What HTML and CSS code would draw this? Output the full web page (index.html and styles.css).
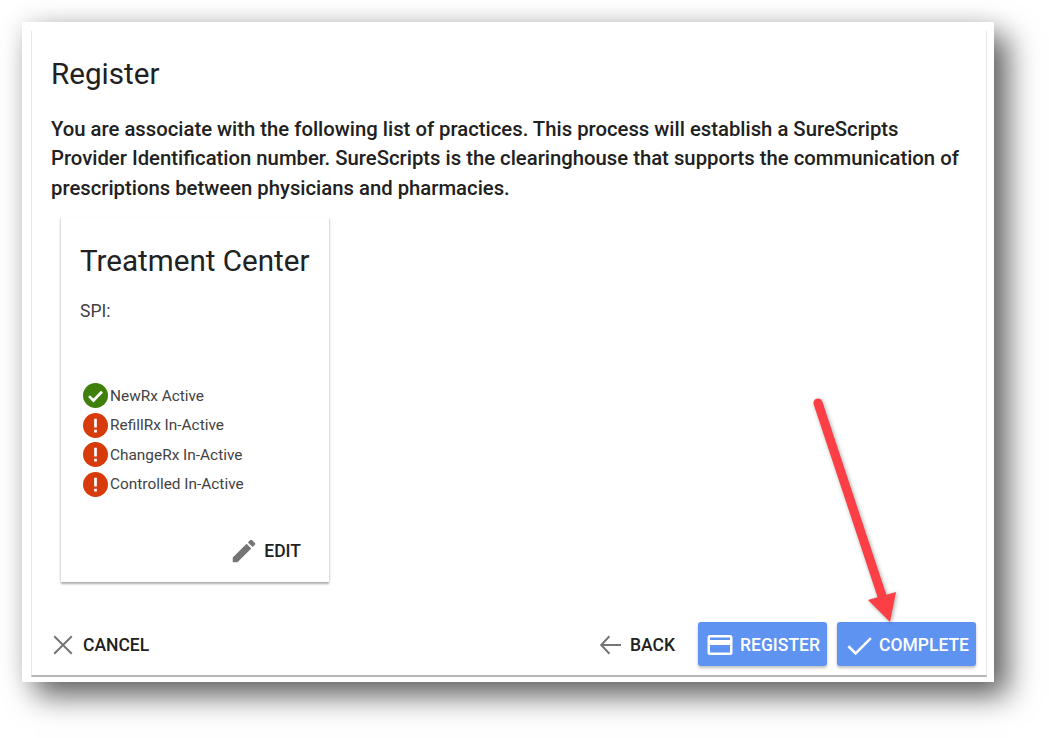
FILE: index.html
```html
<!DOCTYPE html>
<html lang="en">

<head>
    <meta charset="UTF-8">
    <meta name="viewport" content="width=device-width, initial-scale=1.0">
    <link rel="stylesheet" href="styles.css">
    <title>Register</title>
</head>

<body>

    <div class="shot">
        <div class="dialog">
            <h2 class="dialog-title">Register</h2>
            <p class="intro">You are associate with the following list of practices. This process will establish a SureScripts Provider Identification number. SureScripts is the clearinghouse that supports the communication of prescriptions between physicians and pharmacies.</p>

            <div class="practice-card">
                <h3>Treatment Center</h3>
                <p class="spi">SPI:</p>
                <ul class="status-list">
                    <li>
                        <svg class="status-icon" viewBox="0 0 24 24"><circle cx="12" cy="12" r="12" fill="#3f7f0b"/><path d="M5.800 12.600l4.200 4.200 8.200-8.400" fill="none" stroke="#fff" stroke-width="2.600"/></svg>
                        NewRx Active
                    </li>
                    <li>
                        <svg class="status-icon" viewBox="0 0 24 24"><circle cx="12" cy="12" r="12" fill="#d83b0b"/><path d="M10.700 5.500h2.600v8.500h-2.600zM10.700 16h2.600v2.600h-2.600z" fill="#fff"/></svg>
                        RefillRx In-Active
                    </li>
                    <li>
                        <svg class="status-icon" viewBox="0 0 24 24"><circle cx="12" cy="12" r="12" fill="#d83b0b"/><path d="M10.700 5.500h2.600v8.500h-2.600zM10.700 16h2.600v2.600h-2.600z" fill="#fff"/></svg>
                        ChangeRx In-Active
                    </li>
                    <li>
                        <svg class="status-icon" viewBox="0 0 24 24"><circle cx="12" cy="12" r="12" fill="#d83b0b"/><path d="M10.700 5.500h2.600v8.500h-2.600zM10.700 16h2.600v2.600h-2.600z" fill="#fff"/></svg>
                        Controlled In-Active
                    </li>
                </ul>
                <div class="card-actions">
                    <button class="btn">
                        <svg class="icon" viewBox="0 0 24 24"><path d="M3 17.250V21h3.750L17.810 9.940l-3.750-3.750L3 17.250zM20.710 7.040a1 1 0 0 0 0-1.410l-2.340-2.340a1 1 0 0 0-1.410 0l-1.830 1.830 3.750 3.750 1.830-1.830z"/></svg>
                        EDIT
                    </button>
                </div>
            </div>

            <div class="dialog-actions">
                <button class="btn">
                    <svg class="icon" viewBox="0 0 24 24"><path d="M5 5l14 14M19 5L5 19" fill="none" stroke="#757575" stroke-width="1.600"/></svg>
                    CANCEL
                </button>
                <div class="spacer"></div>
                <button class="btn btn-back">
                    <svg class="icon" viewBox="0 0 24 24"><path d="M20.800 12H5M11.500 5L5 12l6.500 7" fill="none" stroke="#757575" stroke-width="1.600"/></svg>
                    BACK
                </button>
                <button class="btn btn-primary">
                    <svg class="icon" viewBox="0 0 24 24"><path d="M20 4H4a2 2 0 0 0-2 2v12a2 2 0 0 0 2 2h16a2 2 0 0 0 2-2V6a2 2 0 0 0-2-2zm0 14H4v-6h16v6zm0-10H4V6h16v2z" fill="#fff"/></svg>
                    REGISTER
                </button>
                <button class="btn btn-primary">
                    <svg class="icon" viewBox="0 0 24 24"><path d="M3.500 13l5.800 5.800L21.500 6.500" fill="none" stroke="#fff" stroke-width="2"/></svg>
                    COMPLETE
                </button>
            </div>
        </div>

        <svg class="arrow" viewBox="0 0 90 230">
            <path d="M6 7L70 200" stroke="#fb3f45" stroke-width="9" stroke-linecap="round" fill="none"/>
            <path d="M56 204L84 196L78 226z" fill="#fb3f45"/>
        </svg>
    </div>

</body>

</html>
```

FILE: styles.css
```css
html, body {
    height: 100%;
}

body {
    font-family: 'Roboto', sans-serif;
    background-color: #fff;
    margin: 0;
    overflow: hidden;
}

.shot {
    position: relative;
    width: 972px;
    height: 660px;
    margin: 22px 0 0 22px;
    padding: 9px 7px 5px 9px;
    box-sizing: border-box;
    background-color: #fff;
    box-shadow: 14px 14px 28px rgba(0, 0, 0, 0.6), 0 0 24px rgba(0, 0, 0, 0.1);
}

.dialog {
    height: 100%;
    box-sizing: border-box;
    padding: 21px 10px 9px 19px;
    display: flex;
    flex-direction: column;
    border-left: 1px solid #e8e8e8;
    border-right: 1px solid #e8e8e8;
    border-bottom: 2px solid #b5b5b5;
}

.dialog-title {
    margin: 0;
    font-size: 29.600px;
    font-weight: 400;
    line-height: 44px;
    color: #212121;
}

.intro {
    margin: 19px 0 0 0;
    font-size: 20.300px;
    font-weight: 500;
    line-height: 29.400px;
    color: #212121;
}

.practice-card {
    width: 268px;
    height: 365px;
    margin: 14px 0 0 10px;
    padding: 23px 10px 0 19px;
    box-sizing: border-box;
    display: flex;
    flex-direction: column;
    background-color: #fff;
    box-shadow: 0 2px 2px rgba(0, 0, 0, 0.3), 0 0 3px rgba(0, 0, 0, 0.12);
    clip-path: inset(0 -6px -6px -6px);
}

.practice-card h3 {
    margin: 0;
    font-size: 29.600px;
    font-weight: 400;
    line-height: 42px;
    color: #212121;
    white-space: nowrap;
}

.spi {
    margin: 17px 0 0 0;
    font-size: 17.500px;
    line-height: 24px;
    color: #424242;
}

.status-list {
    list-style: none;
    margin: 58px 0 0 3px;
    padding: 0;
}

.status-list li {
    display: flex;
    align-items: center;
    gap: 2px;
    height: 29.500px;
    font-size: 15.400px;
    color: #424242;
}

.status-icon {
    width: 25px;
    height: 25px;
}

.card-actions {
    margin-top: auto;
    padding-bottom: 9px;
    display: flex;
    justify-content: flex-end;
    margin-right: 11px;
}

.btn {
    display: flex;
    align-items: center;
    gap: 5px;
    height: 44px;
    padding: 0 7px;
    font-family: inherit;
    font-size: 17.500px;
    font-weight: 500;
    color: #212121;
    background: none;
    border: none;
    border-radius: 3px;
    white-space: nowrap;
}

.icon {
    width: 30px;
    height: 30px;
    fill: #757575;
    flex-shrink: 0;
}

.dialog-actions {
    margin-top: auto;
    margin-left: -10px;
    display: flex;
    align-items: center;
    gap: 10px;
}

.dialog-actions .btn {
    padding-top: 1px;
}

.spacer {
    flex: 1;
}

.btn-back {
    margin-right: 6px;
}

.btn-primary {
    color: #fff;
    background-color: #5e93f2;
    box-shadow: 0 2px 3px rgba(0, 0, 0, 0.25);
}

.arrow {
    position: absolute;
    left: 790px;
    top: 374px;
    width: 90px;
    height: 230px;
    overflow: visible;
    filter: drop-shadow(1px 1px 2px rgba(0, 0, 0, 0.35));
}
```
